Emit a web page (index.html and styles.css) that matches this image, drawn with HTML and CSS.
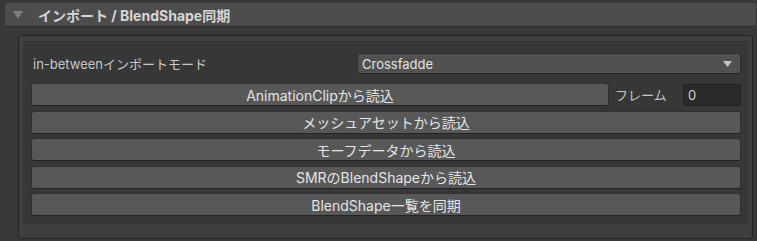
FILE: index.html
```html
<!DOCTYPE html>
<html lang="ja">
<head>
    <meta charset="UTF-8">
    <title>インポート / BlendShape同期</title>
    <link rel="stylesheet" href="styles.css">
</head>
<body>
    <div class="foldout">
        <svg class="fold-arrow" width="10" height="8" viewBox="0 0 10 8"><path d="M0 0 H10 L5 8 Z" fill="#7e7e7e"/></svg>
        <span class="foldout-title">インポート / BlendShape同期</span>
    </div>

    <div class="box">
        <div class="inner">
            <div class="field-row">
                <span class="field-label">in-betweenインポートモード</span>
                <div class="dropdown">
                    <span>Crossfadde</span>
                    <svg class="drop-arrow" width="9" height="6" viewBox="0 0 9 6"><path d="M0 0 H9 L4.5 6 Z" fill="#c4c4c4"/></svg>
                </div>
            </div>

            <div class="buttons">
                <div class="clip-row">
                    <button class="btn">AnimationClipから読込</button>
                    <span class="frame-label">フレーム</span>
                    <input type="text" class="int-field" value="0">
                </div>
                <button class="btn">メッシュアセットから読込</button>
                <button class="btn">モーフデータから読込</button>
                <button class="btn">SMRのBlendShapeから読込</button>
                <button class="btn">BlendShape一覧を同期</button>
            </div>
        </div>
    </div>
</body>
</html>
```

FILE: styles.css
```css
body {
    margin: 0;
    background: #383838;
    font-family: Inter, 'Noto Sans CJK JP', sans-serif;
    font-size: 13px;
    color: #c8c8c8;
}

.foldout {
    display: flex;
    align-items: center;
    height: 23px;
    margin: 3px 1px 0 5px;
    padding-left: 8px;
    background: #4d4d4d;
    border-radius: 3px;
    box-shadow: 0 1px 0 #2c2c2c;
}

.fold-arrow {
    margin-right: 15px;
}

.foldout-title {
    font-size: 14px;
    font-weight: bold;
    color: #d6d6d6;
}

.box {
    margin: 9px 4px 0 18px;
    padding: 5px 4px 14px 4px;
    background: #3f3f3f;
    border: 1px solid #242424;
    border-radius: 3px;
}

.inner {
    background: #373737;
    padding: 12px 7px 8px 8px;
}

.field-row {
    display: flex;
    align-items: center;
    height: 21px;
}

.field-label {
    width: 326px;
    padding-left: 2px;
    box-sizing: border-box;
}

.dropdown {
    flex: 1;
    height: 21px;
    display: flex;
    align-items: center;
    justify-content: space-between;
    padding: 0 8px 0 4px;
    background: #515151;
    border: 1px solid #2f2f2f;
    border-bottom-color: #262626;
    border-radius: 3px;
    box-sizing: border-box;
    color: #e2e2e2;
}

.buttons {
    display: flex;
    flex-direction: column;
    gap: 4.5px;
    margin-top: 9px;
}

.clip-row {
    display: flex;
    align-items: center;
}

.clip-row .btn {
    flex: 1;
}

.btn {
    height: 23px;
    padding: 0;
    font-family: inherit;
    font-size: 14px;
    color: #e4e4e4;
    background: #585858;
    border: 1px solid #303030;
    border-bottom-color: #232323;
    border-radius: 3px;
}

.frame-label {
    width: 74px;
    padding-left: 6px;
    box-sizing: border-box;
}

.int-field {
    width: 58px;
    height: 22px;
    padding: 0 4px;
    font-family: inherit;
    font-size: 13px;
    color: #d2d2d2;
    background: #2a2a2a;
    border: 1px solid #212121;
    border-radius: 3px;
    box-sizing: border-box;
    outline: none;
}
```
